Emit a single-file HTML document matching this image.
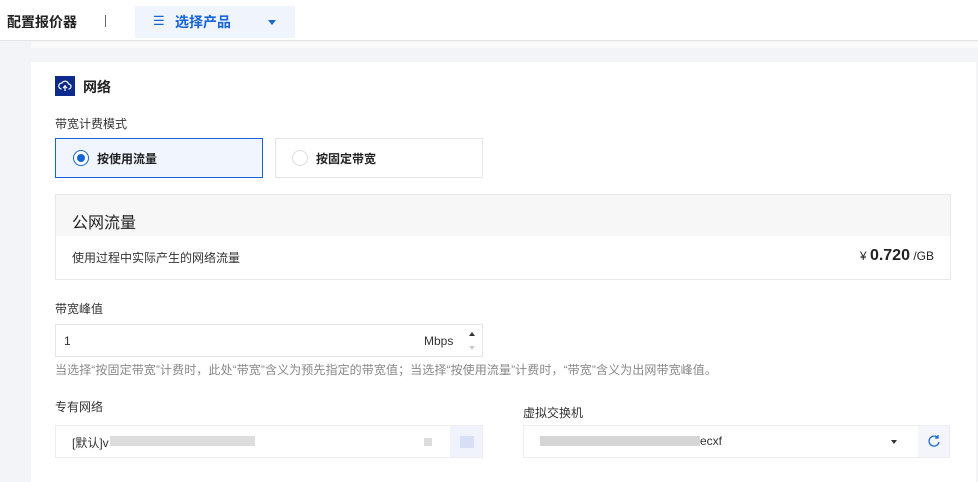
<!DOCTYPE html><html><head><meta charset="utf-8"><style>
*{margin:0;padding:0;box-sizing:border-box}
body{width:978px;height:467px;overflow:hidden;background:#f3f4f7;font-family:"Liberation Sans","Noto Sans CJK SC",sans-serif;position:relative;color:#000}
.a{position:absolute}
.top{left:0;top:0;width:978px;height:41px;background:#fff;border-bottom:1px solid #e5e5e5}
.card{left:31px;top:62px;width:945px;height:420px;background:#fff}
.t12{font-size:12px}
</style></head><body>
<div class="a top">
<div class="a" style="left:7px;top:12px;font-size:14px;font-weight:bold;color:#222">配置报价器</div>
<div class="a" style="left:105px;top:15px;width:1px;height:12px;background:#666"></div>
<div class="a" style="left:135px;top:6px;width:160px;height:32px;background:#f0f4fc"></div>
<div class="a" style="left:153px;top:13px;font-size:13px;color:#1665d8">☰</div>
<div class="a" style="left:175px;top:12px;font-size:14px;font-weight:bold;color:#1665d8">选择产品</div>
<div class="a" style="left:268px;top:20px;border:4px solid transparent;border-top:5px solid #1665d8"></div>
</div>
<div class="a" style="left:31px;top:42px;width:947px;height:6px;background:#fafafa"></div>
<div class="a card"></div>
<div class="a" style="left:55px;top:76px;width:20px;height:20px;background:#0b2a8c"></div>
<svg class="a" style="left:58px;top:79px" width="14" height="14" viewBox="0 0 14 14"><path d="M3.5 10a3 3 0 0 1 .5-6 3.5 3.5 0 0 1 6.5 1 2.5 2.5 0 0 1 0 5M7 6v6M5 9l2-2 2 2" fill="none" stroke="#fff" stroke-width="1.2"/></svg>
<div class="a" style="left:83px;top:77px;font-size:14px;font-weight:bold;color:#222">网络</div>
<div class="a t12" style="left:55px;top:115px;color:#333">带宽计费模式</div>
<div class="a" style="left:55px;top:138px;width:208px;height:40px;border:1px solid #1665d8;background:#f0f5fe"></div>
<div class="a" style="left:73px;top:150px;width:16px;height:16px;border:1px solid #1665d8;border-radius:50%;background:#fff"></div>
<div class="a" style="left:77px;top:154px;width:8px;height:8px;border-radius:50%;background:#1665d8"></div>
<div class="a t12" style="left:97px;top:150px;font-weight:bold;color:#222">按使用流量</div>
<div class="a" style="left:275px;top:138px;width:208px;height:40px;border:1px solid #e5e5e5"></div>
<div class="a" style="left:292px;top:150px;width:16px;height:16px;border:1px solid #ddd;border-radius:50%"></div>
<div class="a t12" style="left:316px;top:150px;font-weight:bold;color:#222">按固定带宽</div>
<div class="a" style="left:55px;top:194px;width:896px;height:86px;border:1px solid #e8e8e8"></div>
<div class="a" style="left:56px;top:195px;width:894px;height:41px;background:#f7f7f7"></div>
<div class="a" style="left:72px;top:209px;font-size:16px;color:#222">公网流量</div>
<div class="a t12" style="left:72px;top:249px;color:#333">使用过程中实际产生的网络流量</div>
<div class="a" style="right:44px;top:247px;color:#222;white-space:nowrap"><span style="font-size:12px">¥ </span><b style="font-size:16px">0.720</b><span style="font-size:12px"> /GB</span></div>
<div class="a t12" style="left:55px;top:300px;color:#333">带宽峰值</div>
<div class="a" style="left:55px;top:324px;width:428px;height:33px;border:1px solid #e5e5e5"></div>
<div class="a t12" style="left:64px;top:334px;color:#333">1</div>
<div class="a t12" style="left:424px;top:334px;color:#333">Mbps</div>
<div class="a" style="left:469px;top:329px;border:3px solid transparent;border-bottom:4px solid #333"></div>
<div class="a" style="left:469px;top:346px;border:3px solid transparent;border-top:4px solid #ccc"></div>
<div class="a" style="left:55px;top:361px;font-size:12px;letter-spacing:0.1px;color:#888;white-space:nowrap">当选择“按固定带宽”计费时，此处“带宽”含义为预先指定的带宽值；当选择“按使用流量”计费时，“带宽”含义为出网带宽峰值。</div>
<div class="a t12" style="left:55px;top:398px;color:#333">专有网络</div>
<div class="a" style="left:55px;top:425px;width:428px;height:33px;border:1px solid #eee"></div>
<div class="a t12" style="left:72px;top:434px;color:#333">[默认]v</div>
<div class="a" style="left:110px;top:436px;width:145px;height:10px;background:#ddd"></div>
<div class="a" style="left:424px;top:438px;width:8px;height:8px;background:#ddd"></div>
<div class="a" style="left:450px;top:426px;width:32px;height:31px;background:#f0f3fb"></div>
<div class="a" style="left:460px;top:436px;width:14px;height:12px;background:#d8dff5"></div>
<div class="a t12" style="left:523px;top:404px;color:#333">虚拟交换机</div>
<div class="a" style="left:523px;top:425px;width:427px;height:33px;border:1px solid #eee"></div>
<div class="a" style="left:540px;top:436px;width:160px;height:10px;background:#d5d5d5"></div>
<div class="a t12" style="left:700px;top:434px;color:#333">ecxf</div>
<div class="a" style="left:891px;top:440px;border:3px solid transparent;border-top:4px solid #333"></div>
<div class="a" style="left:918px;top:426px;width:31px;height:31px;background:#f3f5fb"></div>
<svg class="a" style="left:927px;top:434px" width="14" height="14" viewBox="0 0 14 14"><path d="M11 4A5 5 0 1 0 12 8M11 1v3H8" fill="none" stroke="#1665d8" stroke-width="1.3"/></svg>
</body></html>
